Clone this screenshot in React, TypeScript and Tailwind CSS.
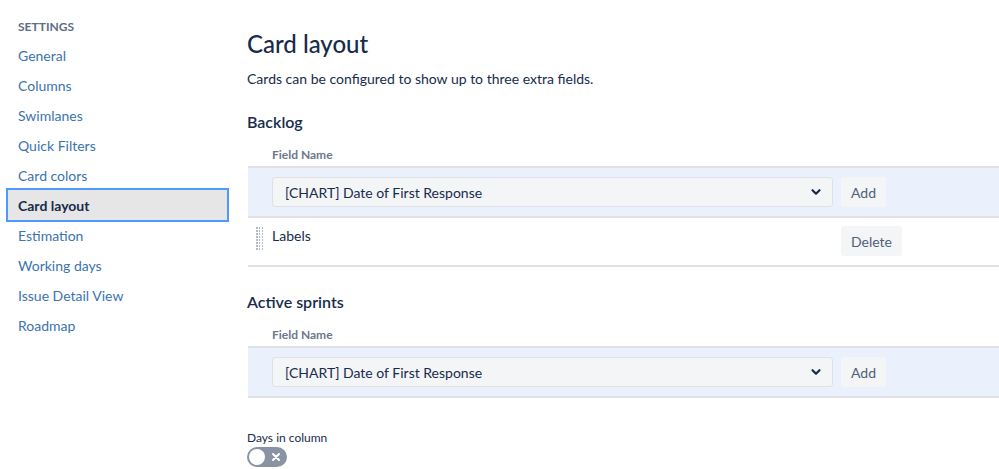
import React from 'react';

const navItems = [
  'General',
  'Columns',
  'Swimlanes',
  'Quick Filters',
  'Card colors',
  'Card layout',
  'Estimation',
  'Working days',
  'Issue Detail View',
  'Roadmap',
];

function Chevron() {
  return (
    <svg width="12" height="12" viewBox="0 0 12 12" className="text-[#172b4d]">
      <path d="M2.5 4.2 6 7.7 9.5 4.2" fill="none" stroke="currentColor" strokeWidth="2.2" strokeLinecap="round" strokeLinejoin="round" />
    </svg>
  );
}

function DragHandle() {
  return (
    <div className="grid grid-cols-3 gap-[1.5px] w-[7px]">
      {Array.from({ length: 24 }).map((_, i) => (
        <span key={i} className="w-[1.5px] h-[1.5px] bg-[#b3bac5]" />
      ))}
    </div>
  );
}

function FieldSelect() {
  return (
    <div className="w-[561px] h-[30px] flex items-center justify-between pl-[12px] pr-[10px] bg-[#f4f5f7] border border-[#dfe1e6] rounded-[3px] text-[14px] text-[#172b4d]">
      <span>[CHART] Date of First Response</span>
      <Chevron />
    </div>
  );
}

function Button({ children }: { children: React.ReactNode }) {
  return (
    <button className="h-[30px] px-[10px] rounded-[3px] bg-[#f4f5f7] text-[14px] text-[#505f79]">
      {children}
    </button>
  );
}

function FieldTable({ labels }: { labels: string[] }) {
  return (
    <div>
      <div className="pl-[25px] h-[16px] leading-[16px] text-[12px] font-bold text-[#6b778c]">Field Name</div>
      <div className="mt-[3px] ml-[1px] border-t-2 border-[#dfe1e6]">
        <div className="h-[50px] flex items-center gap-[8px] pl-[24px] bg-[#eaf1fc] border-b-2 border-[#dfe1e6]">
          <FieldSelect />
          <Button>Add</Button>
        </div>
        {labels.map((label) => (
          <div key={label} className="h-[49px] flex items-start border-b-2 border-[#dfe1e6]">
            <div className="w-[24px] pl-[8px] pt-[9px]">
              <DragHandle />
            </div>
            <div className="w-[569px] pt-[7px] text-[14px] text-[#172b4d]">{label}</div>
            <div className="pt-[8px]">
              <Button>Delete</Button>
            </div>
          </div>
        ))}
      </div>
    </div>
  );
}

export default function App() {
  return (
    <div className="flex min-h-screen bg-white font-['Lato',sans-serif] text-[#172b4d] overflow-hidden">
      <aside className="w-[247px] shrink-0 pl-[8px] pr-[20px] pt-[18px]">
        <div className="pl-[10px] h-[18px] leading-[18px] text-[12px] font-bold text-[#5e6c84]">SETTINGS</div>
        <nav className="mt-[4px]">
          {navItems.map((item) =>
            item === 'Card layout' ? (
              <div
                key={item}
                className="h-[30px] flex items-center pl-[10px] bg-[#e6e6e6] outline-2 outline-[#4c9aff] text-[14px] font-bold text-[#172b4d]"
              >
                {item}
              </div>
            ) : (
              <div key={item} className="h-[30px] flex items-center pl-[10px] text-[14px] text-[#3b73af]">
                {item}
              </div>
            )
          )}
        </nav>
      </aside>

      <main className="flex-1 min-w-0 pt-[28px]">
        <h1 className="h-[32px] leading-[32px] text-[24px] font-medium text-[#172b4d]">Card layout</h1>
        <p className="mt-[9px] h-[20px] leading-[20px] text-[14px]">Cards can be configured to show up to three extra fields.</p>

        <h2 className="mt-[21px] h-[24px] leading-[24px] text-[16px] font-semibold">Backlog</h2>
        <div className="mt-[13px]">
          <FieldTable labels={['Labels']} />
        </div>

        <h2 className="mt-[23px] h-[24px] leading-[24px] text-[16px] font-semibold">Active sprints</h2>
        <div className="mt-[13px]">
          <FieldTable labels={[]} />
        </div>

        <div className="mt-[32px] h-[16px] leading-[16px] text-[12px] text-[#172b4d]">Days in column</div>
        <div className="mt-[1px] w-[40px] h-[20px] rounded-full bg-[#8993a4] flex items-center justify-between px-[2px]">
          <span className="w-[16px] h-[16px] rounded-full bg-white" />
          <svg width="12" height="12" viewBox="0 0 12 12" className="mr-[3px]">
            <path d="M3 3 9 9M9 3 3 9" stroke="white" strokeWidth="2" strokeLinecap="round" />
          </svg>
        </div>
      </main>
    </div>
  );
}
